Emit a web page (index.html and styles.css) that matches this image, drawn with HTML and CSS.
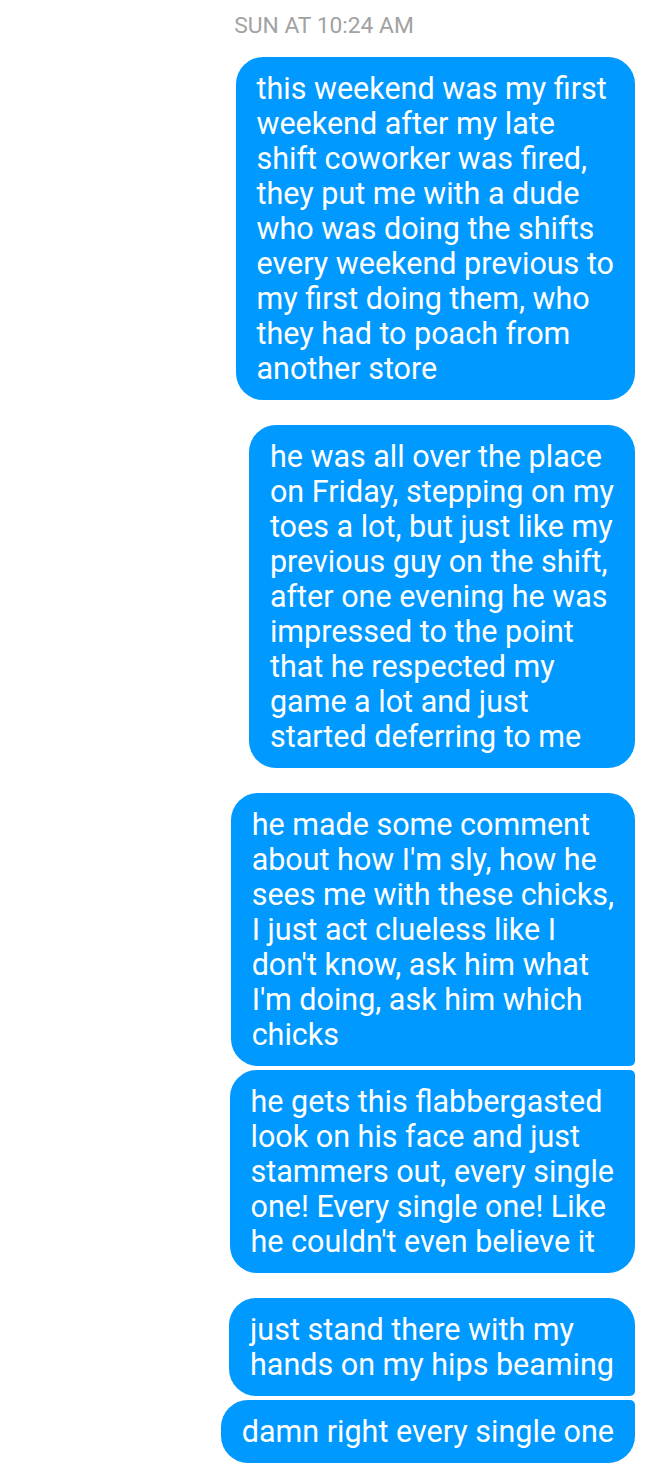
FILE: index.html
```html
<!DOCTYPE html>
<html>
<head>
<meta charset="utf-8">
<link rel="stylesheet" href="styles.css">
</head>
<body>
<div class="thread">
  <div class="stamp">SUN AT 10:24 AM</div>
  <div class="group">
    <div class="bubble">this weekend was my first<br>weekend after my late<br>shift coworker was fired,<br>they put me with a dude<br>who was doing the shifts<br>every weekend previous to<br>my first doing them, who<br>they had to poach from<br>another store</div>
  </div>
  <div class="group">
    <div class="bubble">he was all over the place<br>on Friday, stepping on my<br>toes a lot, but just like my<br>previous guy on the shift,<br>after one evening he was<br>impressed to the point<br>that he respected my<br>game a lot and just<br>started deferring to me</div>
  </div>
  <div class="group">
    <div class="bubble first">he made some comment<br>about how I'm sly, how he<br>sees me with these chicks,<br>I just act clueless like I<br>don't know, ask him what<br>I'm doing, ask him which<br>chicks</div>
    <div class="bubble last">he gets this flabbergasted<br>look on his face and just<br>stammers out, every single<br>one! Every single one! Like<br>he couldn't even believe it</div>
  </div>
  <div class="group">
    <div class="bubble first">just stand there with my<br>hands on my hips beaming</div>
    <div class="bubble last">damn right every single one</div>
  </div>
</div>
</body>
</html>
```
FILE: styles.css
```css
html, body {
  margin: 0;
  padding: 0;
  background: #ffffff;
}
.thread {
  display: flex;
  flex-direction: column;
  padding: 12px 13px 0 0;
  font-family: Roboto, "Noto Sans", sans-serif;
}
.stamp {
  align-self: center;
  margin-left: 13px;
  font-size: 22.8px;
  line-height: 27px;
  color: #a2a2a2;
  margin-bottom: 18px;
}
.group {
  display: flex;
  flex-direction: column;
  align-items: flex-end;
  gap: 4px;
  margin-bottom: 25px;
}
.bubble {
  white-space: nowrap;
  padding: 14px 21px;
  background: #0099ff;
  color: #ffffff;
  font-size: 30.5px;
  line-height: 35px;
  border-radius: 27px;
}
.bubble.first {
  border-bottom-right-radius: 5px;
}
.bubble.last {
  border-top-right-radius: 5px;
}
```
